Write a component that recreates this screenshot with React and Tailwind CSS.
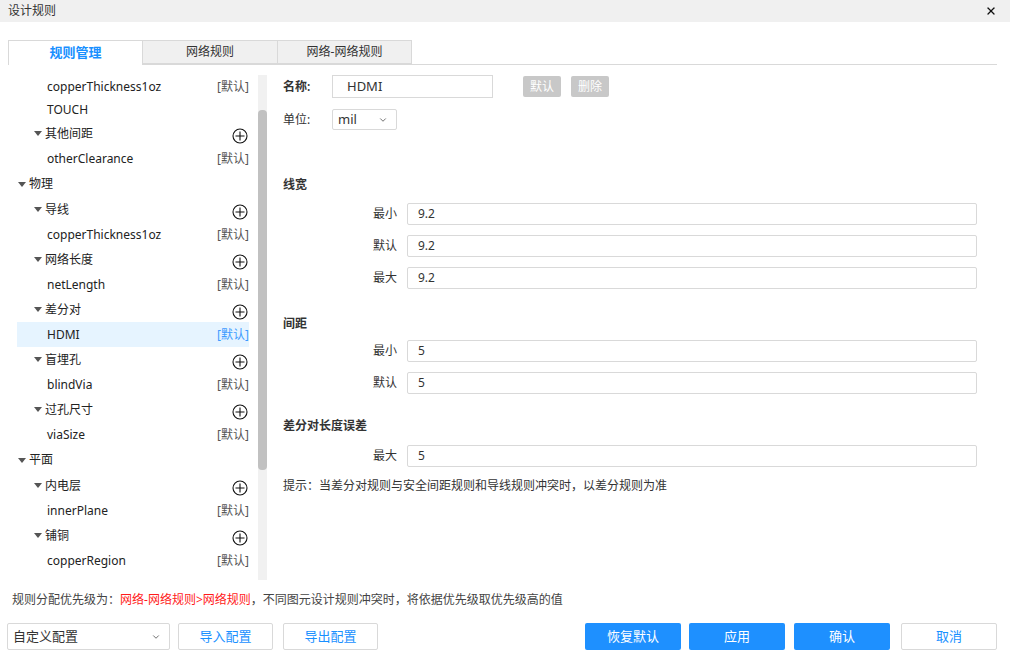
import { X, ChevronDown } from 'lucide-react';

const tree = [
  { label: 'copperThickness1oz', level: 2, tag: true, h: 'h-[24px]' },
  { label: 'TOUCH', level: 2, h: 'h-[22px]' },
  { label: '其他间距', level: 1, add: true },
  { label: 'otherClearance', level: 2, tag: true },
  { label: '物理', level: 0, h: 'h-[26px]' },
  { label: '导线', level: 1, add: true },
  { label: 'copperThickness1oz', level: 2, tag: true },
  { label: '网络长度', level: 1, add: true },
  { label: 'netLength', level: 2, tag: true },
  { label: '差分对', level: 1, add: true },
  { label: 'HDMI', level: 2, tag: true, active: true },
  { label: '盲埋孔', level: 1, add: true },
  { label: 'blindVia', level: 2, tag: true },
  { label: '过孔尺寸', level: 1, add: true },
  { label: 'viaSize', level: 2, tag: true },
  { label: '平面', level: 0, h: 'h-[26px]' },
  { label: '内电层', level: 1, add: true },
  { label: 'innerPlane', level: 2, tag: true },
  { label: '铺铜', level: 1, add: true },
  { label: 'copperRegion', level: 2, tag: true },
  { label: 'TOUCH', level: 2 },
];

function Caret() {
  return (
    <span className="inline-block w-0 h-0 border-x-[4px] border-x-transparent border-t-[5px] border-t-[#555] mr-[3px]" />
  );
}

function PlusCircle() {
  return (
    <svg width="16" height="16" viewBox="0 0 16 16" className="mt-[5px]">
      <circle cx="8" cy="8" r="7" fill="none" stroke="#111" strokeWidth="1.1" />
      <path d="M8 3.5v9M3.5 8h9" stroke="#111" strokeWidth="1.1" />
    </svg>
  );
}

function TreeRow({ item }) {
  const pad = item.level === 0 ? 'pl-[1px]' : item.level === 1 ? 'pl-[17px]' : 'pl-[30px]';
  return (
    <div
      className={`${item.h || 'h-[25px]'} flex items-center justify-between ${pad} ${
        item.active ? 'bg-[#e6f4ff]' : ''
      }`}
    >
      <div className="flex items-center text-[#222]">
        {item.level < 2 && <Caret />}
        <span>{item.label}</span>
      </div>
      {item.tag && (
        <span className={item.active ? 'text-[#3d9bff]' : 'text-[#555]'}>[默认]</span>
      )}
      {item.add && (
        <span className="mr-[1px]">
          <PlusCircle />
        </span>
      )}
    </div>
  );
}

function Field({ label, value }) {
  return (
    <div className="flex items-center h-[22px] mb-[10px]">
      <span className="w-[114px] text-right text-[#333]">{label}</span>
      <div className="ml-[10px] flex-1 h-[22px] border border-[#d9d9d9] rounded-[2px] flex items-center px-[10px] text-[#333]">
        {value}
      </div>
    </div>
  );
}

export default function App() {
  return (
    <div className="w-[1010px] h-[660px] bg-white overflow-hidden text-[12px] text-[#333] font-['Noto_Sans','Noto_Sans_CJK_SC',sans-serif]">
      {/* title bar */}
      <div className="h-[22px] bg-[#f0f0f0] flex items-center justify-between pl-[8px] pr-[13px]">
        <span className="text-[#333]">设计规则</span>
        <X size={12} strokeWidth={2.6} className="text-[#111]" />
      </div>

      {/* tabs */}
      <div className="mt-[18px] ml-[8px] mr-[13px] flex h-[25px] border-b border-[#d9d9d9]">
        <div className="w-[135px] bg-white border border-b-0 border-[#d9d9d9] flex items-center justify-center text-[#1890ff] font-semibold text-[13px] -mb-px">
          规则管理
        </div>
        <div className="w-[135px] bg-[#f0f0f0] border border-l-0 border-[#d9d9d9] flex items-center justify-center text-[#333] text-[12px]">
          网络规则
        </div>
        <div className="w-[134px] bg-[#f0f0f0] border border-l-0 border-[#d9d9d9] flex items-center justify-center text-[#333] text-[12px]">
          网络-网络规则
        </div>
      </div>

      {/* body */}
      <div className="flex h-[515px]">
        {/* tree */}
        <div className="w-[259px] ml-[8px] flex">
          <div className="w-[241px] pl-[9px] pt-[10px] overflow-hidden">
            {tree.map((item, i) => (
              <TreeRow key={i} item={item} />
            ))}
          </div>
          <div className="ml-[9px] w-[9px] mt-[10px] bg-[#f1f1f1] flex flex-col">
            <div className="mt-[35px] h-[360px] bg-[#c1c1c1] rounded-[4px]" />
          </div>
        </div>

        {/* form */}
        <div className="ml-[16px] w-[694px] pt-[10px]">
          <div className="flex items-center h-[23px]">
            <span className="w-[49px] font-semibold text-[#333]">名称:</span>
            <div className="w-[161px] h-[23px] border border-[#d9d9d9] flex items-center pl-[14px] text-[13px] text-[#333]">
              HDMI
            </div>
            <div className="ml-[30px] w-[38px] h-[21px] bg-[#c8c8c8] rounded-[2px] text-white flex items-center justify-center">
              默认
            </div>
            <div className="ml-[10px] w-[38px] h-[21px] bg-[#c8c8c8] rounded-[2px] text-white flex items-center justify-center">
              删除
            </div>
          </div>
          <div className="flex items-center h-[21px] mt-[11px]">
            <span className="w-[49px] text-[#333]">单位:</span>
            <div className="w-[65px] h-[21px] border border-[#d9d9d9] rounded-[2px] flex items-center justify-between pl-[5px] pr-[8px] text-[13px] text-[#333]">
              mil
              <ChevronDown size={10} strokeWidth={2} className="text-[#555]" />
            </div>
          </div>

          <div className="mt-[46px] h-[18px] flex items-center font-semibold">线宽</div>
          <div className="mt-[9px]">
            <Field label="最小" value="9.2" />
            <Field label="默认" value="9.2" />
            <Field label="最大" value="9.2" />
          </div>

          <div className="mt-[26px] h-[18px] flex items-center font-semibold">间距</div>
          <div className="mt-[7px]">
            <Field label="最小" value="5" />
            <Field label="默认" value="5" />
          </div>

          <div className="mt-[23px] h-[18px] flex items-center font-semibold">差分对长度误差</div>
          <div className="mt-[10px]">
            <Field label="最大" value="5" />
          </div>
          <div className="mt-[0px] h-[18px] flex items-center text-[#333]">
            提示：当差分对规则与安全间距规则和导线规则冲突时，以差分规则为准
          </div>
        </div>
      </div>

      {/* footer note */}
      <div className="h-[40px] flex items-center pl-[12px] text-[#444]">
        规则分配优先级为：<span className="text-[#ff1a1a]">网络-网络规则&gt;网络规则</span>，不同图元设计规则冲突时，将依据优先级取优先级高的值
      </div>

      {/* footer buttons */}
      <div className="flex items-center h-[27px] mt-[3px] pl-[7px] pr-[13px]">
        <div className="w-[163px] h-[27px] border border-[#d9d9d9] rounded-[2px] flex items-center justify-between pl-[5px] pr-[8px] text-[13px] text-[#333]">
          自定义配置
          <ChevronDown size={10} strokeWidth={2} className="text-[#555]" />
        </div>
        <button className="ml-[8px] w-[95px] h-[27px] border border-[#d9d9d9] rounded-[2px] text-[#1890ff] text-[13px] bg-white">
          导入配置
        </button>
        <button className="ml-[10px] w-[95px] h-[27px] border border-[#d9d9d9] rounded-[2px] text-[#1890ff] text-[13px] bg-white">
          导出配置
        </button>
        <div className="flex-1" />
        <button className="w-[96px] h-[27px] rounded-[2px] bg-[#1e90ff] text-white text-[13px]">恢复默认</button>
        <button className="ml-[8px] w-[96px] h-[27px] rounded-[2px] bg-[#1e90ff] text-white text-[13px]">应用</button>
        <button className="ml-[9px] w-[96px] h-[27px] rounded-[2px] bg-[#1e90ff] text-white text-[13px]">确认</button>
        <button className="ml-[11px] w-[96px] h-[27px] border border-[#d9d9d9] rounded-[2px] bg-white text-[#1890ff] text-[13px]">取消</button>
      </div>
    </div>
  );
}
